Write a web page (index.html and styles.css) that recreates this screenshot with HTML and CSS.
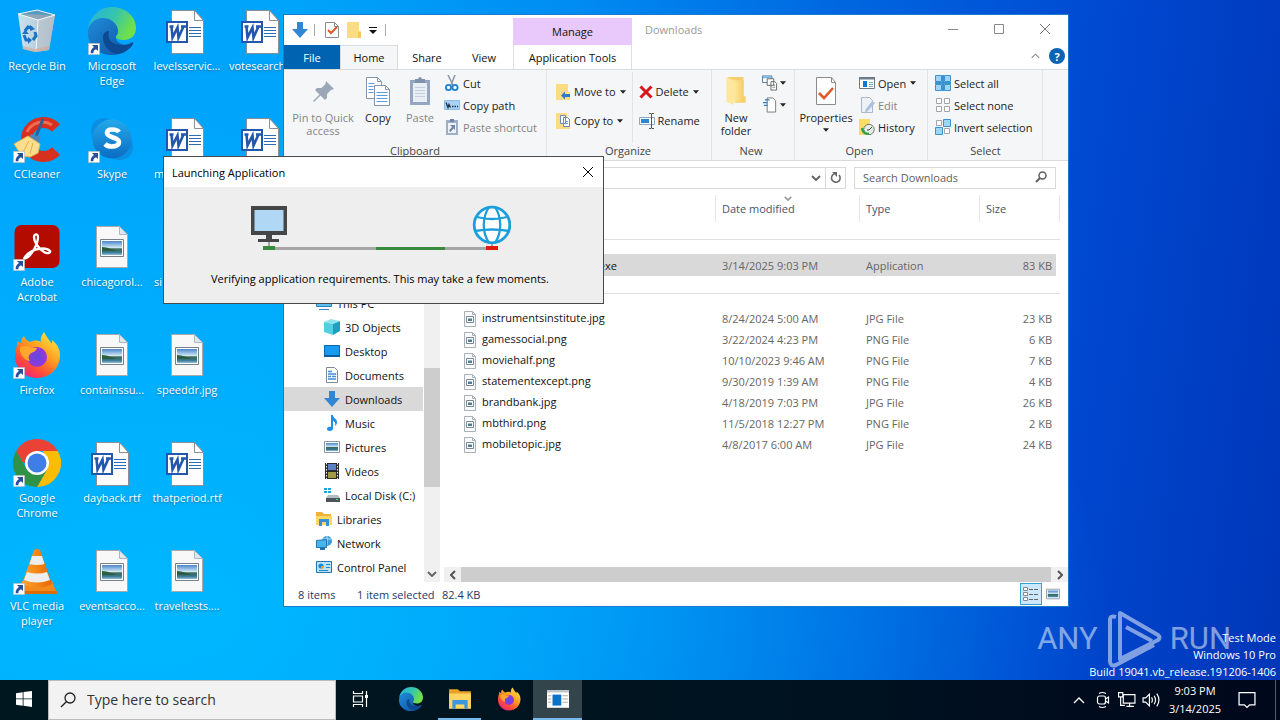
FILE: index.html
```html
<!DOCTYPE html>
<html lang="en">
<head>
<meta charset="utf-8">
<title>Desktop</title>
<link rel="stylesheet" href="styles.css">
</head>
<body>
<svg class="sprite" aria-hidden="true">
  <defs>
    <linearGradient id="gEdgeA" x1="0" y1="0" x2="1" y2=".4"><stop offset="0" stop-color="#27b3dc"/><stop offset=".55" stop-color="#34c4b0"/><stop offset="1" stop-color="#6fe04a"/></linearGradient>
    <linearGradient id="gEdgeB" x1="0" y1="0" x2="1" y2="1"><stop offset="0" stop-color="#1f8fdd"/><stop offset="1" stop-color="#0d4f9e"/></linearGradient>
    <linearGradient id="gFox" x1=".9" y1="0" x2=".2" y2="1"><stop offset="0" stop-color="#fff14a"/><stop offset=".45" stop-color="#ff9a1f"/><stop offset=".75" stop-color="#ff4a3a"/><stop offset="1" stop-color="#e8208a"/></linearGradient>
    <radialGradient id="gFoxIn"><stop offset="0" stop-color="#5c4be0"/><stop offset="1" stop-color="#9a35d8"/></radialGradient>
    <linearGradient id="gSky" x1="0" y1="0" x2="0" y2="1"><stop offset="0" stop-color="#4a86cc"/><stop offset=".5" stop-color="#d6ecf6"/><stop offset=".55" stop-color="#3d6b58"/><stop offset=".8" stop-color="#35758f"/><stop offset="1" stop-color="#8fc0dc"/></linearGradient>
    <linearGradient id="gFolder" x1="0" y1="0" x2="1" y2="0"><stop offset="0" stop-color="#ffe9a0"/><stop offset="1" stop-color="#f7cd63"/></linearGradient>
    <linearGradient id="gCone" x1="0" y1="0" x2="1" y2="0"><stop offset="0" stop-color="#ffa62e"/><stop offset="1" stop-color="#e96500"/></linearGradient>
    <linearGradient id="gBin" x1="0" y1="0" x2="1" y2="0"><stop offset="0" stop-color="#dfe8ee"/><stop offset=".6" stop-color="#c3cfd8"/><stop offset="1" stop-color="#93a6b5"/></linearGradient>
    <linearGradient id="gSkype" x1="0" y1="0" x2="0" y2="1"><stop offset="0" stop-color="#25a9ea"/><stop offset="1" stop-color="#0a6cc4"/></linearGradient>
  </defs>

  <symbol id="shortcut" viewBox="0 0 12 12"><path fill="#fff" stroke="#9aa" stroke-width=".6" d="M.3.3h11.4v11.4H.3z"/><path fill="#274f9c" d="M4 2h6v6L8 6.200C6 7 5.200 8.300 5.400 10.300H2.700C2.500 7.500 3.600 5.500 6 4z"/></symbol>

  <symbol id="bin" viewBox="0 0 48 48">
    <path fill="url(#gBin)" fill-opacity=".92" d="M5 7l37 1-6 35-14 2-12-3z"/><path fill="#7f95a6" fill-opacity=".7" d="M5 7l19-4 18 5-17 5z"/><path fill="#b9c6cf" opacity=".8" d="M25 13l17-5-6 35-13 2z"/><path fill="none" stroke="#f4f8fa" d="M5 7l19-4 18 5-17 5zM25 13l-2 31"/>
    <g fill="none" stroke="#1673c6" stroke-width="3"><path d="M12 24l3-4 4 1"/><path d="M11 28l2 5h4"/><path d="M22 25l1 4-3 4"/></g><path fill="#1673c6" d="M17 18l5 4-5 2zM15 30l4 3-4 4zM9 27l3-4 4 4z"/>
    <path fill="#d8a78c" opacity=".6" d="M10 39l12 3 14-3-1 4-12 2-13-3z"/>
  </symbol>
  <symbol id="edge" viewBox="0 0 48 48">
    <path fill="url(#gEdgeB)" d="M0 25C1 13 9 8 18 9c9 1 14 7 14 14 0 4-4 5-4 8 0 4 5 7 11 7 3 0 6-1 6-1-4 7-12 11-21 11C10 48-1 38 0 25z"/>
    <path fill="#0d4a91" d="M15 30c0 8 5 15 14 17 7-1 13-5 16-10 1-2-1-2-2-1-6 3-14 3-19-1-3-2-4-6-3-11-4 0-6 3-6 6z"/>
    <path fill="url(#gEdgeA)" d="M0 22C2 9 12 0 24 0c14 0 24 10 24 21 0 9-7 12-12 12-6 0-9-2-8-4 1-1 2-2 2-5 0-7-7-13-15-13C7 11 2 16 0 22z"/>
  </symbol>
  <symbol id="word" viewBox="0 0 40 46">
    <path fill="#fdfdfd" stroke="#8a8f96" d="M6.500 2.500h23l9 10v33h-32z"/><path fill="#fff" stroke="#8a8f96" d="M29.500 2.500v10h9z"/>
    <path stroke="#2b6cb8" stroke-width="1.200" d="M24 19.500h12M24 22.500h12M24 25.500h12M24 28.500h12"/>
    <path fill="#fff" stroke="#2257ab" stroke-width="2" d="M2 14h20v20H2z"/>
    <path fill="none" stroke="#2257ab" stroke-width="2.600" d="M6.500 18.500l1 11 5-10 1 10 5-11M4.500 18.500h4M16 18.500h5"/>
  </symbol>
  <symbol id="picfile" viewBox="0 0 32 44">
    <path fill="#f8f8f8" stroke="#a9a9a9" d="M.5 1.500h23l8 8v33H.5z"/><path fill="#dfe7ee" stroke="#a9b8c4" d="M23.500 1.500v8h8z"/>
    <path fill="#fff" stroke="#777f88" d="M4.500 14.500h23v17h-23z"/><path fill="url(#gSky)" d="M6 16h20v14H6z"/><path fill="#2e5c3e" d="M6 22c5 0 12 3 15 4H6z"/>
  </symbol>
  <symbol id="ccleaner" viewBox="0 0 48 48">
    <path fill="none" stroke="#d8301f" stroke-width="11" d="M43 13A17 17 0 1 0 43 36"/><path fill="none" stroke="#f26a50" stroke-width="3" d="M39 10A17 17 0 0 0 14 17"/>
    <path stroke="#2e5f98" stroke-width="3" d="M30 4L22 24"/><path fill="#4b85bd" d="M18 19l10 3-3 8-9-5z"/><path fill="#ffdf8e" stroke="#e2b35b" d="M1 29l14-8 12 8-2 9-8 4-8-1z"/><path stroke="#e0ad50" d="M16 26l-6 11M20 28l-3 11"/>
  </symbol>
  <symbol id="skype" viewBox="0 0 48 48">
    <rect x="3" y="3" width="26" height="27" rx="13" fill="#0b8fe2"/><rect x="19" y="18" width="26" height="27" rx="13" fill="#0b8fe2"/><circle cx="24" cy="24" r="19.500" fill="url(#gSkype)"/>
    <path fill="none" stroke="#fff" stroke-width="4.600" d="M31 17c-2-3-12-4-12 1s12 4 12 9-10 6-14 2"/>
  </symbol>
  <symbol id="acrobat" viewBox="0 0 48 48">
    <rect x="1.500" y="2" width="45" height="43" rx="7" fill="#b30b00"/><path fill="none" stroke="#fff" stroke-width="2.300" d="M12 34c3-4 8-7 13-8 5-1 10 0 12 2 1 2-3 3-6 1-5-3-10-10-10-15 0-3 4-4 4 0 0 7-6 17-10 20-3 2-5 2-3 0z"/>
  </symbol>
  <symbol id="firefox" viewBox="0 0 48 48">
    <path fill="url(#gFox)" d="M31 1c-3 4-4 7-3 10-3-2-8-2-11 0-3-1-5-3-6-6-2 2-3 4-3 7l-4-2c1 4-2 8-2 15 0 13 10 22 22 22s23-9 23-23c0-7-4-12-8-15l0 4C36 9 33 5 31 1z"/>
    <circle cx="24" cy="26" r="10" fill="url(#gFoxIn)"/><path fill="#ffa72c" d="M7 16c5-2 9-1 11 1l6 0c-1 4-5 4-7 6-2 2-2 5 0 7-6-1-11-7-10-14z"/>
  </symbol>
  <symbol id="chrome" viewBox="0 0 48 48">
    <path fill="#ea4335" d="M3.200 12A24 24 0 0 1 44.800 12H24v12H10z"/><path fill="#fbbc05" d="M44.800 12A24 24 0 0 1 24 48l10-18-4-18z"/><path fill="#2f9247" d="M3.200 12A24 24 0 0 0 24 48l10.500-18H24L13.600 30z"/>
    <circle cx="24" cy="24" r="12" fill="#fff"/><circle cx="24" cy="24" r="9.500" fill="#3f7de8"/>
  </symbol>
  <symbol id="vlc" viewBox="0 0 48 48">
    <path fill="#f08a1d" d="M9 34h30l5 13H4z"/><path fill="#dd6b06" d="M4 44h40v3H4z"/>
    <path fill="url(#gCone)" d="M21 3q3-2 6 0l12 34q-14 7-30 0z"/><path fill="#eee" d="M19 9h10l2.500 8q-7.500 2-15 0zM14 25q10 3 20 0l3 8q-13 5-26 0z"/>
  </symbol>

  <symbol id="down" viewBox="0 0 16 16"><path fill="#3187d3" d="M5 0h6v7h5l-8 9-8-9h5z"/></symbol>
  <symbol id="docCheck" viewBox="0 0 14 16"><path fill="#fff" stroke="#8b8b8b" d="M.5.5h9l4 4v11H.5z"/><path fill="none" stroke="#8b8b8b" d="M9.500.5v4h4"/><path fill="none" stroke="#e2572b" stroke-width="2" d="M3 8l3 3 6-6"/></symbol>
  <symbol id="folderSmall" viewBox="0 0 14 16"><path fill="#fbdc82" d="M0 0h12v9h2v7H0z"/><path fill="#f3c95e" d="M11 10h3v6h-3z"/></symbol>
  <symbol id="caret" viewBox="0 0 7 4"><path fill="#222" d="M0 0h7L3.500 4z"/></symbol>
  <symbol id="qatMore" viewBox="0 0 8 8"><path fill="#111" d="M0 1h8v1H0zM0 4h8L4 8z"/></symbol>
  <symbol id="pin" viewBox="0 0 26 30"><path fill="#9aa7b7" d="M16 5l8 8-3 1-4 4 0 4-2 2-4.500-4.500L4 26l-1-1 6.500-6.500L5 14l2-2 4.500 0 4-4z"/></symbol>
  <symbol id="copy" viewBox="0 0 26 30"><g fill="#fff" stroke="#8496ad"><path d="M1.500 1.500h11l4 4v17h-15z"/><path d="M9.500 9.500h11l4 4v16h-15z"/><path d="M20.500 9.500v4h4M12.500 1.500v4h4" fill="none"/></g><path stroke="#5d9be0" d="M3.500 7.500h6M3.500 10.500h5M3.500 13.500h5M3.500 16.500h5M11.500 16.500h11M11.500 19.500h11M11.500 22.500h11M11.500 25.500h11"/></symbol>
  <symbol id="paste" viewBox="0 0 22 30"><path fill="#94a6c2" d="M1 4h20v25H1z"/><path fill="#e9eef5" d="M4 7h14v19H4z"/><path fill="#7f90aa" d="M6 3h3q2-4 4 0h3v4H6z"/><path stroke="#c3cede" d="M6 11.500h10M6 14.500h10M6 17.500h10M6 20.500h10"/></symbol>
  <symbol id="cut" viewBox="0 0 16 16"><path stroke="#8a97a5" stroke-width="1.500" d="M4 0l5 10M11 0L7 10"/><g fill="none" stroke="#1d82cf" stroke-width="1.800"><circle cx="4.500" cy="12.500" r="2.600"/><circle cx="11" cy="12.500" r="2.600"/></g></symbol>
  <symbol id="copyPath" viewBox="0 0 16 16"><path fill="#a9d2f5" stroke="#8cbde8" d="M.5 3.500h15v9H.5z"/><path fill="none" stroke="#234" stroke-width="1.300" d="M2 5.500l2 5 1-3 1.500 3M8 9.500h1.500M10.500 9.500H12M13 9.500h1"/></symbol>
  <symbol id="pasteShort" viewBox="0 0 16 16"><path fill="#9fafc8" d="M2 1h12v15H2z"/><path fill="#eef2f7" d="M4 4h8v10H4z"/><path fill="#6f86ab" d="M6 0h4v3H6zM6 6h5v5L9.500 9.500 6.500 13 5 11.500 8 8z"/></symbol>
  <symbol id="moveTo" viewBox="0 0 14 16"><path fill="#fbdc82" d="M0 0h12v8h2v8H0z"/><path fill="#2b7cc4" d="M5 11.500l4-4v2.500h5v3H9v2.500z"/></symbol>
  <symbol id="copyTo" viewBox="0 0 14 16"><path fill="#fbdc82" d="M0 0h11l1 8h2v8H0z"/><path fill="#fff" stroke="#6b8bb8" d="M4.500 2.500h5v8h-5zM7.500 4.500h4l2 2v7h-6z"/><path stroke="#5d9be0" d="M9 8.500h3M9 10.500h3"/></symbol>
  <symbol id="delete" viewBox="0 0 14 14"><path stroke="#d6171c" stroke-width="3" d="M1.500 1.500l11 11M12.500 1.500l-11 11"/></symbol>
  <symbol id="rename" viewBox="0 0 16 16"><path fill="#fff" stroke="#8fa9c4" d="M.5 4.500h15v7H.5z"/><path fill="#2f86d0" d="M2 6h8v4H2z"/><path fill="none" stroke="#555" d="M10 .5h2l.5.5.5-.5h2M12.500 1v14M10 15.500h2l.5-.5.5.5h2"/></symbol>
  <symbol id="newFolder" viewBox="0 0 20 28"><path fill="#f5cf6e" d="M2 1h15v18h2v6H9z"/><path fill="#ffe7a0" d="M1 1l7 3v23l-7-3z"/><path fill="url(#gFolder)" d="M8 4h9v20H8z"/></symbol>
  <symbol id="newItem" viewBox="0 0 17 16"><path fill="#fff" stroke="#3d7cae" d="M.5.5h10v7H.5z"/><path fill="#7db4dc" d="M1 1h9v2H1z"/><path fill="#fff" stroke="#666" d="M5.500 3.500h7v7h-7zM9.500 6.500h4l2 2v7h-6z"/><path stroke="#888" d="M11 10.500h3M11 12.500h3"/></symbol>
  <symbol id="easy" viewBox="0 0 17 16"><path fill="#fff" stroke="#777" d="M5.500.5h6l3 3v12h-9z"/><path stroke="#2d7fbe" stroke-width="1.300" d="M3 2.500h5M1 5.500h5M2 8.500h4"/></symbol>
  <symbol id="props" viewBox="0 0 22 30"><path fill="#fff" stroke="#8b8b8b" d="M1.500 1.500h15l4 5v22h-19z"/><path fill="none" stroke="#8b8b8b" d="M16.500 1.500v5h4"/><path fill="none" stroke="#e2572b" stroke-width="2.600" d="M4 17l5 5L18 12"/></symbol>
  <symbol id="open" viewBox="0 0 16 14"><path fill="#fff" stroke="#6d7b88" d="M.5 1.500h15v11H.5z"/><path fill="#6d7b88" d="M0 1h16v2.500H0z"/><path fill="#1677cc" d="M4 5h4v6H4z"/><path stroke="#8ab" d="M10 6.500h4M10 8.500h4M10 10.500h4"/></symbol>
  <symbol id="edit" viewBox="0 0 16 16"><path fill="#eef2f7" stroke="#a9b8ca" d="M2.500.5h8l3 3v12h-11z"/><path fill="#a9c2dd" d="M13 4l3 2-7 8-3 2 .5-3.500z"/></symbol>
  <symbol id="history" viewBox="0 0 16 16"><path fill="#fbdc6a" d="M0 0h11v8l-3 8H0z"/><circle cx="10" cy="10.500" r="5.200" fill="#e5ece5" stroke="#6c7d6e"/><path fill="none" stroke="#2ca24a" stroke-width="2.400" d="M3 9q1 6 7 6"/><path fill="none" stroke="#444" d="M10 11l3-3M10 11H8"/></symbol>
  <symbol id="selAll" viewBox="0 0 16 16"><path fill="#9fd3f7" stroke="#3a93d0" d="M.5.5h6v6h-6zM9.500.5h6v6h-6zM.5 9.500h6v6h-6zM9.500 9.500h6v6h-6z"/><path stroke="#3a93d0" stroke-width="2" d="M8 0v16M0 8h16"/></symbol>
  <symbol id="selNone" viewBox="0 0 16 16"><path fill="#fff" stroke="#a5a5a5" d="M1.500 1.500h5v5h-5zM9.500 1.500h5v5h-5zM1.500 9.500h5v5h-5zM9.500 9.500h5v5h-5z"/></symbol>
  <symbol id="selInv" viewBox="0 0 16 16"><path fill="#fff" stroke="#a5a5a5" d="M1.500 1.500h5v5h-5zM9.500 9.500h5v5h-5z"/><path fill="#9fd3f7" stroke="#3a93d0" d="M8.500.5h7v7h-7zM.5 8.500h7v7h-7z"/></symbol>

  <symbol id="chevDown" viewBox="0 0 10 6"><path fill="none" stroke="currentColor" stroke-width="2" d="M1 1l4 4 4-4"/></symbol>
  <symbol id="chevUp" viewBox="0 0 12 7"><path fill="none" stroke="currentColor" stroke-width="1.400" d="M1 6l5-5 5 5"/></symbol>
  <symbol id="chevLeft" viewBox="0 0 6 10"><path fill="none" stroke="currentColor" stroke-width="2" d="M5 1L1 5l4 4"/></symbol>
  <symbol id="chevRight" viewBox="0 0 6 10"><path fill="none" stroke="currentColor" stroke-width="2" d="M1 1l4 4-4 4"/></symbol>
  <symbol id="cross" viewBox="0 0 12 12"><path stroke="currentColor" d="M1 1l10 10M11 1L1 11"/></symbol>
  <symbol id="refresh" viewBox="0 0 12 12"><path fill="none" stroke="#666" stroke-width="1.600" d="M9 3a4.300 4.300 0 1 1-5-1"/><path fill="#666" d="M2 0h5v5z"/></symbol>
  <symbol id="magnify" viewBox="0 0 12 12"><circle cx="7.500" cy="4.500" r="3.500" fill="none" stroke="currentColor" stroke-width="1.500"/><path stroke="currentColor" stroke-width="2" d="M5 7L1 11"/></symbol>
  <symbol id="magnifyBig" viewBox="0 0 16 16"><circle cx="10" cy="6" r="5" fill="none" stroke="#222" stroke-width="1.300"/><path stroke="#222" stroke-width="1.300" d="M6.300 9.700L1 15"/></symbol>

  <symbol id="thispc" viewBox="0 0 16 16"><path fill="#5cc0f2" stroke="#2d7fbb" d="M.5 2.500h15v9H.5z"/><path fill="#3585c2" d="M3 14h10v1H3z"/></symbol>
  <symbol id="cube" viewBox="0 0 16 16"><path fill="#8fe4ee" d="M0 3l7-3 9 2-7 3z"/><path fill="#52cfe0" d="M0 3l9 2v11l-9-3z"/><path fill="#1f9fc0" d="M9 5l7-3v10l-7 4z"/></symbol>
  <symbol id="deskIco" viewBox="0 0 16 16"><path fill="#169bf0" stroke="#0d67ae" d="M.5 2.500h15v11H.5z"/><path fill="#0b5d9f" d="M0 12h16v2H0z"/></symbol>
  <symbol id="docs" viewBox="0 0 16 16"><path fill="#fff" stroke="#7c8a98" d="M2.500.5h8l3 3v12h-11z"/><path stroke="#3e8fd6" stroke-width="1.300" d="M4 4.500h4M4 7h8M4 9.500h3M8 9.500h4M4 12h8"/></symbol>
  <symbol id="music" viewBox="0 0 16 16"><path fill="#1d8fe6" d="M7 0h2c0 3 4 4 4 7 0 2-1 3-2 4 1-3-1-5-2-5v7c0 2-1 3-3 3s-3-1-3-2 1-3 4-2z"/></symbol>
  <symbol id="pics" viewBox="0 0 16 16"><path fill="#fff" stroke="#8c959e" d="M.5 2.500h15v11H.5z"/><path fill="url(#gSky)" d="M2 4h12v8H2z"/></symbol>
  <symbol id="video" viewBox="0 0 16 16"><path fill="#2b2b2b" d="M1 0h14v16H1z"/><path fill="#5d7fc4" d="M4 1h8v6H4z"/><path fill="#a39a48" d="M4 9h8v6H4z"/><path stroke="#eee" stroke-dasharray="1.500 1.500" d="M2.500 0v16M13.500 0v16"/></symbol>
  <symbol id="disk" viewBox="0 0 16 16"><path fill="#1fa6e0" d="M0 1h3v2H0zM4 1h3v2H4zM0 4h3v2H0zM4 4h3v2H4z"/><path fill="#b5bcc2" d="M4 8h10l2 3H2z"/><path fill="#4c555c" d="M2 11h14v4H2z"/><path fill="#4be07a" d="M12 12h2v1h-2z"/></symbol>
  <symbol id="libs" viewBox="0 0 16 16"><path fill="#eeb13a" d="M0 1h6l2 2h7v11H0z"/><path fill="#ffd95f" d="M0 5h16v9H0z"/><path fill="#3a8fd9" d="M3 15V8h10v7h-3v-4H6v4z"/></symbol>
  <symbol id="net" viewBox="0 0 16 16"><circle cx="11" cy="6" r="5" fill="#3c9bd8"/><path stroke="#bce3fa" fill="none" d="M7 4h8M11 1v9"/><path fill="#48b5ef" stroke="#2274ac" d="M.5 5.500l10-1v8l-10 0z"/><path fill="#2274ac" d="M4 13h5v2H4z"/></symbol>
  <symbol id="control" viewBox="0 0 16 16"><path fill="#bde3fa" stroke="#2374b0" d="M.5 2.500h15v11H.5z"/><circle cx="5" cy="7" r="2.600" fill="#1c88d4"/><path fill="#f39b28" d="M5 7h3a3 3 0 0 1-3 3z"/><path stroke="#1c88d4" d="M10 5.500h4M10 8.500h4M3 11.500h9"/></symbol>
  <symbol id="imgSmall" viewBox="0 0 12 16"><path fill="#fafafa" stroke="#a8b0b8" d="M.5.500h8l3 3v12H.5z"/><path fill="none" stroke="#a8b0b8" d="M8.500.5v3h3"/><path fill="#fff" stroke="#7a8896" d="M2.500 5.500h7v6h-7z"/><path fill="#4b7d9c" d="M4 7.500h4v2.500H4z"/></symbol>
  <symbol id="details" viewBox="0 0 16 14"><path fill="#fff" stroke="#888" d="M.5.5h4v3h-4zM.5 5.500h4v3h-4zM.5 10.500h4v3h-4z"/><path stroke="#666" stroke-dasharray="4 1" d="M6 2.500h10M6 7.500h10M6 12.500h10"/></symbol>

  <symbol id="win" viewBox="0 0 16 16"><path fill="#fff" d="M0 2.200l6.700-1v6.300H0zM7.500 1.100L16 0v7.500H7.500zM0 8.300h6.700v6.400L0 13.800zM7.500 8.300H16V16l-8.500-1.200z"/></symbol>
  <symbol id="taskview" viewBox="0 0 18 18"><g fill="none" stroke="#fff" stroke-width="1.200"><path d="M1.500 1v2.500h9V1M1.500 6h9v6h-9zM1.500 17v-2.500h9V17M14.500 1v16"/></g><path fill="#fff" d="M13 5h3v3h-3z"/></symbol>
  <symbol id="explorer" viewBox="0 0 22 20"><path fill="#e9a229" d="M1 1h8l2 2h10v15H1z"/><path fill="#ffd662" d="M1 5h20v14H1z"/><path fill="#3d97df" d="M4 19v-8h14v8h-3v-4H7v4z"/></symbol>
  <symbol id="app" viewBox="0 0 20 18"><path fill="#fff" d="M0 1h20v16H0z"/><path fill="#bcc3c8" d="M0 1h20v2H0z"/><path fill="#0c72c9" d="M5 5h8v10H5z"/><path stroke="#b9a999" d="M1 6h3M1 9h3M1 12h3M14 6h5M14 9h5M14 12h5"/></symbol>
  <symbol id="cam" viewBox="0 0 14 18"><g fill="none" stroke="#fff" stroke-width="1.200"><rect x="1.500" y="5" width="8" height="8" rx="2"/><path d="M9.500 8l3-2v6l-3-2M3 2.500q3-2 7 0M3 15.500q3 2 7 0"/></g></symbol>
  <symbol id="lan" viewBox="0 0 17 15"><g fill="none" stroke="#fff" stroke-width="1.100"><path d="M5 2.500h11v8H5zM8 13.500h7M11 10.500v3M.5.500h4v4h-4zM2.500 4.500v8h4"/></g></symbol>
  <symbol id="vol" viewBox="0 0 17 14"><g fill="none" stroke="#fff" stroke-width="1.100"><path d="M1 5h2.500L7 1.500v11L3.500 9H1zM9 4.500q1.600 2.500 0 5M11.500 3q2.500 4 0 8M14 1q4 6 0 12"/></g></symbol>
  <symbol id="notif" viewBox="0 0 17 16"><path fill="none" stroke="#fff" stroke-width="1.200" d="M1 1h15v11.500h-5L8.500 15 6 12.500H1z"/></symbol>
</svg>

<main class="desktop">
  <ul class="shortcuts">
    <li><span class="art"><svg class="i48"><use href="#bin"/></svg></span>Recycle Bin</li>
    <li><span class="art"><svg class="i48"><use href="#ccleaner"/></svg><svg class="arrow"><use href="#shortcut"/></svg></span>CCleaner</li>
    <li><span class="art"><svg class="i48"><use href="#acrobat"/></svg><svg class="arrow"><use href="#shortcut"/></svg></span>Adobe<br>Acrobat</li>
    <li><span class="art"><svg class="i48"><use href="#firefox"/></svg><svg class="arrow"><use href="#shortcut"/></svg></span>Firefox</li>
    <li><span class="art"><svg class="i48"><use href="#chrome"/></svg><svg class="arrow"><use href="#shortcut"/></svg></span>Google<br>Chrome</li>
    <li><span class="art"><svg class="i48"><use href="#vlc"/></svg><svg class="arrow"><use href="#shortcut"/></svg></span>VLC media<br>player</li>
    <li><span class="art"><svg class="i48"><use href="#edge"/></svg><svg class="arrow"><use href="#shortcut"/></svg></span>Microsoft<br>Edge</li>
    <li><span class="art"><svg class="i48"><use href="#skype"/></svg><svg class="arrow"><use href="#shortcut"/></svg></span>Skype</li>
    <li><span class="art"><svg class="ipic"><use href="#picfile"/></svg></span>chicagorol...</li>
    <li><span class="art"><svg class="ipic"><use href="#picfile"/></svg></span>containssu...</li>
    <li><span class="art doc"><svg class="iword"><use href="#word"/></svg></span>dayback.rtf</li>
    <li><span class="art"><svg class="ipic"><use href="#picfile"/></svg></span>eventsacco...</li>
    <li><span class="art doc"><svg class="iword"><use href="#word"/></svg></span>levelsservic...</li>
    <li class="start"><span class="art doc"><svg class="iword"><use href="#word"/></svg></span>m</li>
    <li class="start"><span class="art"></span>si</li>
    <li><span class="art"><svg class="ipic"><use href="#picfile"/></svg></span>speeddr.jpg</li>
    <li><span class="art doc"><svg class="iword"><use href="#word"/></svg></span>thatperiod.rtf</li>
    <li><span class="art"><svg class="ipic"><use href="#picfile"/></svg></span>traveltests....</li>
    <li class="start"><span class="art doc"><svg class="iword"><use href="#word"/></svg></span>votesearch</li>
    <li><span class="art doc"><svg class="iword"><use href="#word"/></svg></span></li>
  </ul>

  <section class="explorer">
    <header class="caption">
      <div class="cap-left">
        <div class="qat">
          <svg class="i16"><use href="#down"/></svg><span class="tick"></span>
          <button aria-label="Properties"><svg class="i16n"><use href="#docCheck"/></svg></button>
          <button aria-label="New folder"><svg class="i16n"><use href="#folderSmall"/></svg></button>
          <button aria-label="Customize toolbar"><svg class="more"><use href="#qatMore"/></svg></button><span class="tick"></span>
        </div>
        <nav class="tabs"><button class="file">File</button><button class="active">Home</button><button>Share</button><button class="view">View</button></nav>
      </div>
      <div class="context"><span>Manage</span><button>Application Tools</button></div>
      <div class="cap-right">
        <div class="title"><h1>Downloads</h1>
          <button aria-label="Minimize"><svg class="i12"><path stroke="#888" d="M1 6.500h10"/></svg></button>
          <button aria-label="Maximize"><svg class="i12"><path fill="none" stroke="#888" d="M1.500 1.500h9v9h-9z"/></svg></button>
          <button aria-label="Close"><svg class="i12"><use href="#cross"/></svg></button>
        </div>
        <div class="helpers"><button aria-label="Collapse ribbon"><svg class="fold"><use href="#chevUp"/></svg></button><button class="help" aria-label="Help">?</button></div>
      </div>
    </header>

    <div class="ribbon">
      <section class="group clip"><div class="tools">
        <button class="big off w66"><svg class="ibig"><use href="#pin"/></svg>Pin to Quick<br>access</button>
        <button class="big w44"><svg class="ibig"><use href="#copy"/></svg>Copy</button>
        <button class="big off w40"><svg class="ibig"><use href="#paste"/></svg>Paste</button>
        <div class="stack"><button><svg class="i16"><use href="#cut"/></svg>Cut</button><button><svg class="i16"><use href="#copyPath"/></svg>Copy path</button><button class="off"><svg class="i16"><use href="#pasteShort"/></svg>Paste shortcut</button></div>
      </div><h2>Clipboard</h2></section>
      <section class="group org"><div class="tools">
        <div class="stack two"><button><svg class="i16"><use href="#moveTo"/></svg>Move to<svg class="caret"><use href="#caret"/></svg></button><button><svg class="i16"><use href="#copyTo"/></svg>Copy to<svg class="caret"><use href="#caret"/></svg></button></div>
        <div class="stack two split"><button><svg class="i14"><use href="#delete"/></svg>Delete<svg class="caret"><use href="#caret"/></svg></button><button><svg class="i16"><use href="#rename"/></svg>Rename</button></div>
      </div><h2>Organize</h2></section>
      <section class="group new"><div class="tools">
        <button class="big w44"><svg class="ibig"><use href="#newFolder"/></svg>New<br>folder</button>
        <div class="stack"><button aria-label="New item"><svg class="i16"><use href="#newItem"/></svg><svg class="caret"><use href="#caret"/></svg></button><button aria-label="Easy access"><svg class="i16"><use href="#easy"/></svg><svg class="caret"><use href="#caret"/></svg></button></div>
      </div><h2>New</h2></section>
      <section class="group opn"><div class="tools">
        <button class="big w56"><svg class="ibig"><use href="#props"/></svg>Properties<br><svg class="caret"><use href="#caret"/></svg></button>
        <div class="stack"><button><svg class="i16"><use href="#open"/></svg>Open<svg class="caret"><use href="#caret"/></svg></button><button class="off"><svg class="i16"><use href="#edit"/></svg>Edit</button><button><svg class="i16"><use href="#history"/></svg>History</button></div>
      </div><h2>Open</h2></section>
      <section class="group sel"><div class="tools">
        <div class="stack"><button><svg class="i16"><use href="#selAll"/></svg>Select all</button><button><svg class="i16"><use href="#selNone"/></svg>Select none</button><button><svg class="i16"><use href="#selInv"/></svg>Invert selection</button></div>
      </div><h2>Select</h2></section>
    </div>

    <div class="address">
      <div class="path"><button aria-label="Previous locations"><svg class="chev"><use href="#chevDown"/></svg></button><button class="refresh" aria-label="Refresh"><svg class="i12"><use href="#refresh"/></svg></button></div>
      <label class="search"><input type="text" placeholder="Search Downloads" aria-label="Search Downloads"><svg class="i12"><use href="#magnify"/></svg></label>
    </div>

    <div class="panes">
      <ul class="tree">
        <li class="top"><svg class="i16"><use href="#thispc"/></svg>This PC</li>
        <li><svg class="i16"><use href="#cube"/></svg>3D Objects</li>
        <li><svg class="i16"><use href="#deskIco"/></svg>Desktop</li>
        <li><svg class="i16"><use href="#docs"/></svg>Documents</li>
        <li class="current"><svg class="i16"><use href="#down"/></svg>Downloads</li>
        <li><svg class="i16"><use href="#music"/></svg>Music</li>
        <li><svg class="i16"><use href="#pics"/></svg>Pictures</li>
        <li><svg class="i16"><use href="#video"/></svg>Videos</li>
        <li><svg class="i16"><use href="#disk"/></svg>Local Disk (C:)</li>
        <li class="top"><svg class="i16"><use href="#libs"/></svg>Libraries</li>
        <li class="top"><svg class="i16"><use href="#net"/></svg>Network</li>
        <li class="top"><svg class="i16"><use href="#control"/></svg>Control Panel</li>
      </ul>
      <div class="vbar"><span class="thumb"></span><button aria-label="Scroll down"><svg class="chev"><use href="#chevDown"/></svg></button></div>
      <div class="files">
        <table>
          <colgroup><col><col class="c-date"><col class="c-type"><col class="c-size"><col class="c-end"></colgroup>
          <thead><tr><th></th><th><svg class="sort"><use href="#chevDown"/></svg>Date modified</th><th>Type</th><th colspan="2">Size</th></tr></thead>
          <tbody>
            <tr class="rule"><td colspan="5"><hr></td></tr>
            <tr class="picked"><td>.exe</td><td>3/14/2025 9:03 PM</td><td>Application</td><td>83 KB</td></tr>
            <tr class="rule"><td colspan="5"><hr></td></tr>
            <tr><td><svg><use href="#imgSmall"/></svg>instrumentsinstitute.jpg</td><td>8/24/2024 5:00 AM</td><td>JPG File</td><td>23 KB</td></tr>
            <tr><td><svg><use href="#imgSmall"/></svg>gamessocial.png</td><td>3/22/2024 4:23 PM</td><td>PNG File</td><td>6 KB</td></tr>
            <tr><td><svg><use href="#imgSmall"/></svg>moviehalf.png</td><td>10/10/2023 9:46 AM</td><td>PNG File</td><td>7 KB</td></tr>
            <tr><td><svg><use href="#imgSmall"/></svg>statementexcept.png</td><td>9/30/2019 1:39 AM</td><td>PNG File</td><td>4 KB</td></tr>
            <tr><td><svg><use href="#imgSmall"/></svg>brandbank.jpg</td><td>4/18/2019 7:03 PM</td><td>JPG File</td><td>26 KB</td></tr>
            <tr><td><svg><use href="#imgSmall"/></svg>mbthird.png</td><td>11/5/2018 12:27 PM</td><td>PNG File</td><td>2 KB</td></tr>
            <tr><td><svg><use href="#imgSmall"/></svg>mobiletopic.jpg</td><td>4/8/2017 6:00 AM</td><td>JPG File</td><td>24 KB</td></tr>
          </tbody>
        </table>
        <div class="hbar"><button aria-label="Scroll left"><svg class="chevh"><use href="#chevLeft"/></svg></button><span class="thumb"></span><button aria-label="Scroll right"><svg class="chevh"><use href="#chevRight"/></svg></button></div>
      </div>
    </div>

    <footer class="status"><span class="count">8 items</span><span class="chosen">1 item selected</span><span>82.4 KB</span>
      <div class="views"><button class="on" aria-label="Details view"><svg class="i16"><use href="#details"/></svg></button><button aria-label="Thumbnail view"><svg class="i14"><use href="#pics"/></svg></button></div>
    </footer>
  </section>

  <section class="dialog" role="dialog" aria-labelledby="dlg">
    <header><h2 id="dlg">Launching Application</h2><button aria-label="Close dialog"><svg class="i12"><use href="#cross"/></svg></button></header>
    <div class="dialog-body">
      <svg class="link-art" viewBox="0 0 262 48" aria-hidden="true">
        <path fill="#454647" d="M2 2h36v29H2zM17 31h6v4h7v3H9v-3h8z"/><path fill="#b0d7f3" d="M5.500 6h29v21h-29z"/>
        <path stroke="#a6a6a6" stroke-width="3" d="M25 44.500h212"/><path stroke="#a6a6a6" stroke-width="2" d="M20 38v5M243 39v4"/><path stroke="#388a3c" stroke-width="3" d="M127 44.500h69"/><path fill="#388a3c" d="M14 42h12v4H14z"/><path fill="#e01b0c" d="M237 42h12v4h-12z"/>
        <circle cx="243" cy="21" r="17.800" fill="#fff" stroke="#1b9fdc" stroke-width="2.800"/><g fill="none" stroke="#1b9fdc" stroke-width="2.300"><path d="M240 3c-7 11-7 25 0 36M246 3c7 11 7 25 0 36M228 13q15 4 30 0M226 27q17-3 34 0"/></g>
      </svg>
      <p>Verifying application requirements. This may take a few moments.</p>
    </div>
  </section>

  <div class="watermark"><span>ANY</span><svg viewBox="0 0 56 60"><g fill="none" stroke="currentColor" stroke-width="4" stroke-linejoin="round"><path d="M10 8q-6-2-6 3v41q0 6 6 4l38-20"/><path d="M14 4l38 22q3 3 0 5L14 50z"/><path d="M20 18l26 14"/></g></svg><span>RUN</span></div>
  <div class="build"><p>Test Mode</p><p>Windows 10 Pro</p><p>Build 19041.vb_release.191206-1406</p></div>
</main>

<footer class="taskbar">
  <button class="task first" aria-label="Start"><svg class="i16"><use href="#win"/></svg></button>
  <label class="finder"><svg class="i16"><use href="#magnifyBig"/></svg><input type="text" placeholder="Type here to search" aria-label="Type here to search"></label>
  <button class="task view-all" aria-label="Task view"><svg class="i18"><use href="#taskview"/></svg></button>
  <button class="task" aria-label="Microsoft Edge"><svg class="i24"><use href="#edge"/></svg></button>
  <button class="task running" aria-label="File Explorer"><svg class="i24"><use href="#explorer"/></svg></button>
  <button class="task" aria-label="Firefox"><svg class="i24"><use href="#firefox"/></svg></button>
  <button class="task focused" aria-label="Application"><svg class="i22"><use href="#app"/></svg></button>
  <div class="tray">
    <button aria-label="Hidden icons"><svg class="up"><use href="#chevUp"/></svg></button>
    <button aria-label="Meet now"><svg class="i18"><use href="#cam"/></svg></button>
    <button aria-label="Network"><svg class="i18"><use href="#lan"/></svg></button>
    <button aria-label="Volume"><svg class="i18"><use href="#vol"/></svg></button>
    <time class="clock">9:03 PM<br>3/14/2025</time>
    <button class="notes" aria-label="Notifications"><svg class="i18"><use href="#notif"/></svg></button>
    <button class="peek" aria-label="Show desktop"></button>
  </div>
</footer>
</body>
</html>
```

FILE: styles.css
```css
* { box-sizing: border-box; }
html, body { height: 100%; }
body { margin: 0; display: flex; flex-direction: column; overflow: hidden; font: 12px/15px "Open Sans", "Noto Sans", sans-serif; color: #111; }
button { margin: 0; padding: 0; border: 0; background: none; font: inherit; color: inherit; }
input { border: 0; padding: 0; background: none; font: inherit; color: inherit; min-width: 0; outline: 0; }
input::placeholder { color: inherit; opacity: 1; }
ul { list-style: none; margin: 0; padding: 0; }
h1, h2, p { margin: 0; font: inherit; }
svg { display: block; flex: none; }
.sprite { position: absolute; width: 0; height: 0; }
.i12 { width: 12px; height: 12px; }
.i14 { width: 14px; height: 14px; }
.i16 { width: 16px; height: 16px; }
.i16n { width: 14px; height: 16px; }
.i18 { width: 18px; height: 18px; }
.i22 { width: 22px; height: 20px; }
.i24 { width: 24px; height: 24px; }
.i48 { width: 48px; height: 48px; }
.ipic { width: 32px; height: 44px; }
.iword { width: 40px; height: 46px; }
.up { width: 12px; height: 7px; }
.fold { width: 9px; height: 6px; }
.chev { width: 10px; height: 6px; color: #666; }
.chevh { width: 6px; height: 10px; color: #555; }
.caret { width: 6px; height: 4px; }

.desktop { position: relative; flex: 1; min-height: 0; overflow: hidden; background: radial-gradient(ellipse at 12% 90%, #00b7ff 0, #00b7ff00 60%), linear-gradient(97deg, #00a4fc 0, #00a4fa 22%, #008cf2 42%, #0066e0 62%, #0048d0 82%, #0036b8 100%); }
.shortcuts { display: grid; grid-auto-flow: column; grid-template-rows: repeat(6, 108px); grid-auto-columns: 75px; justify-content: start; color: #fff; text-align: center; text-shadow: 0 1px 2px #0458; font-size: 11px; }
.shortcuts li { padding: 7px 1px 0 0; white-space: nowrap; }
.shortcuts .start { text-align: left; padding-left: 4px; }
.art { position: relative; display: flex; justify-content: center; align-items: center; width: 48px; height: 48px; margin: 0 auto 3px 13px; }
.doc { padding-right: 5px; }
.shortcuts .start .art { margin-left: 9px; }
.arrow { position: absolute; left: 0; bottom: 0; width: 12px; height: 12px; }

.explorer { position: absolute; left: 283px; top: 14px; right: 211px; bottom: 73px; display: flex; flex-direction: column; background: #fff; border: 1px solid #1979ca; font-size: 11px; }
.caption { display: flex; height: 54px; }
.cap-left { width: 229px; display: flex; flex-direction: column; }
.qat { flex: 1; display: flex; align-items: center; gap: 8px; padding-left: 8px; }
.tick { width: 1px; height: 12px; background: #aaa; margin: 0 2px 0 -2px; }
.tick:last-child { margin-left: 0; }
.more { width: 8px; height: 8px; }
.tabs { display: flex; height: 24px; }
.tabs button { width: 58px; }
.tabs .file { width: 56px; background: #0063b1; color: #fff; }
.tabs .active { background: #f5f6f7; border: 1px solid #dadbdc; border-bottom: 0; }
.tabs .view { width: 56px; }
.context { width: 119px; display: flex; flex-direction: column; padding-top: 3px; text-align: center; }
.context span { height: 27px; line-height: 27px; background: #e9c8fb; }
.context button { height: 24px; border: solid #e3dce8; border-width: 0 1px; }
.cap-right { flex: 1; display: flex; flex-direction: column; }
.title { flex: 1; display: flex; align-items: center; padding-bottom: 2px; color: #777; }
.title h1 { margin: 0 auto 0 13px; color: #999; }
.title button { width: 46px; display: flex; justify-content: center; }
.helpers { height: 24px; display: flex; justify-content: flex-end; align-items: center; gap: 9px; padding: 0 3px 2px 0; color: #888; }
.help { width: 16px; height: 16px; border-radius: 50%; background: #0a64b4; color: #fff; font-weight: 700; }

.ribbon { display: flex; height: 92px; background: #f5f6f7; border: solid #dadbdc; border-width: 1px 0; color: #222; }
.group { display: flex; flex-direction: column; padding: 2px 0; border-right: 1px solid #e3e4e5; }
.group h2 { text-align: center; color: #444; line-height: 15px; padding-right: 6px; }
.org h2 { padding-right: 10px; }
.tools { flex: 1; display: flex; }
.clip { width: 263px; padding-left: 6px; }
.org { width: 165px; padding-left: 8px; }
.new { width: 83px; padding-left: 2px; }
.opn { width: 133px; padding-left: 3px; }
.sel { width: 115px; padding-left: 7px; }
.big { display: flex; flex-direction: column; align-items: center; line-height: 13px; white-space: nowrap; padding-top: 4px; }
.ibig { width: 26px; height: 30px; margin-bottom: 5px; }
.big .caret { margin-top: 4px; }
.off { color: #858585; }
.w66 { width: 66px; }
.w44 { width: 44px; }
.w40 { width: 40px; }
.w56 { width: 56px; margin-right: 5px; }
.stack { display: flex; flex-direction: column; }
.stack button { height: 22px; display: flex; align-items: center; gap: 3px; white-space: nowrap; }
.clip .stack { padding-left: 4px; }
.stack.two { padding-top: 5px; }
.stack.two button { height: 29px; }
.split { margin-left: 6px; padding-left: 6px; border-left: 1px solid #e3e4e5; }
.new .stack { padding-left: 4px; }
.new .stack button { gap: 1px; }
.stack .caret { margin-left: 1px; }

.address { display: flex; gap: 8px; height: 34px; padding: 6px 12px; }
.path { flex: 1; display: flex; justify-content: flex-end; border: 1px solid #d9d9d9; }
.path button { width: 18px; display: flex; justify-content: center; align-items: center; }
.path .refresh { width: 20px; border-left: 1px solid #d9d9d9; }
.search { width: 202px; display: flex; align-items: center; border: 1px solid #d9d9d9; padding: 0 8px 2px; color: #606060; }
.search input { flex: 1; }

.panes { flex: 1; min-height: 0; display: flex; }
.tree { width: 139px; display: flex; flex-direction: column; justify-content: flex-end; overflow: hidden; padding-bottom: 3px; }
.tree li { flex: none; height: 24px; display: flex; align-items: center; gap: 5px; padding-left: 40px; white-space: nowrap; }
.tree .top { padding-left: 32px; }
.tree .current { background: #d9d9d9; }
.vbar { width: 16px; margin-left: 1px; background: #f0f0f0; display: flex; flex-direction: column; justify-content: flex-end; }
.vbar .thumb { height: 119px; background: #cdcdcd; margin-bottom: 79px; }
.vbar button { height: 16px; display: flex; align-items: center; justify-content: center; }
.files { flex: 1; display: flex; flex-direction: column; justify-content: space-between; padding-left: 4px; }
table { margin: 0 8px 0 14px; border-collapse: separate; border-spacing: 0; table-layout: fixed; width: calc(100% - 22px); color: #666; }
.c-date { width: 144px; }
.c-type { width: 120px; }
.c-size { width: 76px; }
.c-end { width: 4px; }
th { position: relative; height: 27px; padding: 0 6px; font-weight: 400; text-align: left; color: #44546f; border-right: 1px solid #e5e5e5; }
.sort { position: absolute; left: 68px; top: 1px; width: 8px; height: 5px; color: #999; }
td { height: 21px; padding: 0 6px; white-space: nowrap; }
td:first-child { color: #111; }
td:nth-child(4) { text-align: right; padding-right: 4px; }
td svg { display: inline-block; width: 12px; height: 16px; margin: 0 6px 0 0; vertical-align: middle; }
.picked td { height: 22px; background: #d9d9d9; }
.picked td:first-child { text-align: right; padding-right: 99px; }
.rule td { height: 32px; padding: 0; }
.rule hr { margin: 2px 0 0; border: 0; border-top: 1px solid #e0e0e0; }
.hbar { height: 15px; display: flex; background: #f0f0f0; }
.hbar .thumb { flex: 1; background: #cdcdcd; }
.hbar button { width: 17px; display: flex; align-items: center; justify-content: center; }
.status { height: 24px; display: flex; align-items: center; padding-left: 14px; color: #243a66; }
.count { width: 59px; }
.chosen { width: 85px; }
.views { margin-left: auto; display: flex; padding-right: 4px; }
.views button { width: 22px; height: 22px; display: flex; align-items: center; justify-content: center; }
.views .on { background: #cce8ff; border: 1px solid #3aa0d0; }

.dialog { position: absolute; left: 163px; top: 156px; width: 441px; background: #eee; border: 1px solid #4a4a4a; color: #000; font-size: 11px; }
.dialog header { height: 30px; display: flex; align-items: center; justify-content: space-between; padding: 0 9px 0 8px; background: #fff; }
.dialog-body { display: flex; flex-direction: column; align-items: center; gap: 19px; padding: 17px 7px 17px 0; }
.link-art { width: 262px; height: 48px; }

.watermark { position: absolute; right: 49px; bottom: 11px; display: flex; align-items: center; gap: 8px; color: #fff; opacity: .5; font: 31px/40px Roboto, sans-serif; }
.watermark svg { width: 56px; height: 60px; }
.build { position: absolute; right: 4px; bottom: 0; color: #fff; text-align: right; font-size: 11px; line-height: 17px; }

.taskbar { height: 40px; display: flex; background: linear-gradient(90deg, #00171f, #001320 60%, #00081c); color: #fff; }
.task { width: 49px; display: flex; align-items: center; justify-content: center; border-bottom: 2px solid transparent; }
.first { width: 48px; }
.view-all { margin-right: 1px; }
.finder { width: 288px; display: flex; align-items: center; gap: 11px; padding-left: 11px; background: #f2f2f2; border: 1px solid #bbb; color: #333; font-size: 14px; line-height: 20px; }
.finder input { flex: 1; }
.running { border-image: linear-gradient(90deg, transparent 10%, #76b9ed 10%, #76b9ed 90%, transparent 90%) 2; }
.focused { background: #34444b; border-color: #76b9ed; }
.tray { margin-left: auto; display: flex; }
.tray button { width: 24px; display: flex; align-items: center; justify-content: center; }
.clock { width: 64px; text-align: center; font-size: 11px; line-height: 18px; padding-top: 2px; }
.tray .notes { width: 32px; margin: 0 12px 0 4px; }
.tray .peek { width: 5px; border-left: 1px solid #56606b; }
```
